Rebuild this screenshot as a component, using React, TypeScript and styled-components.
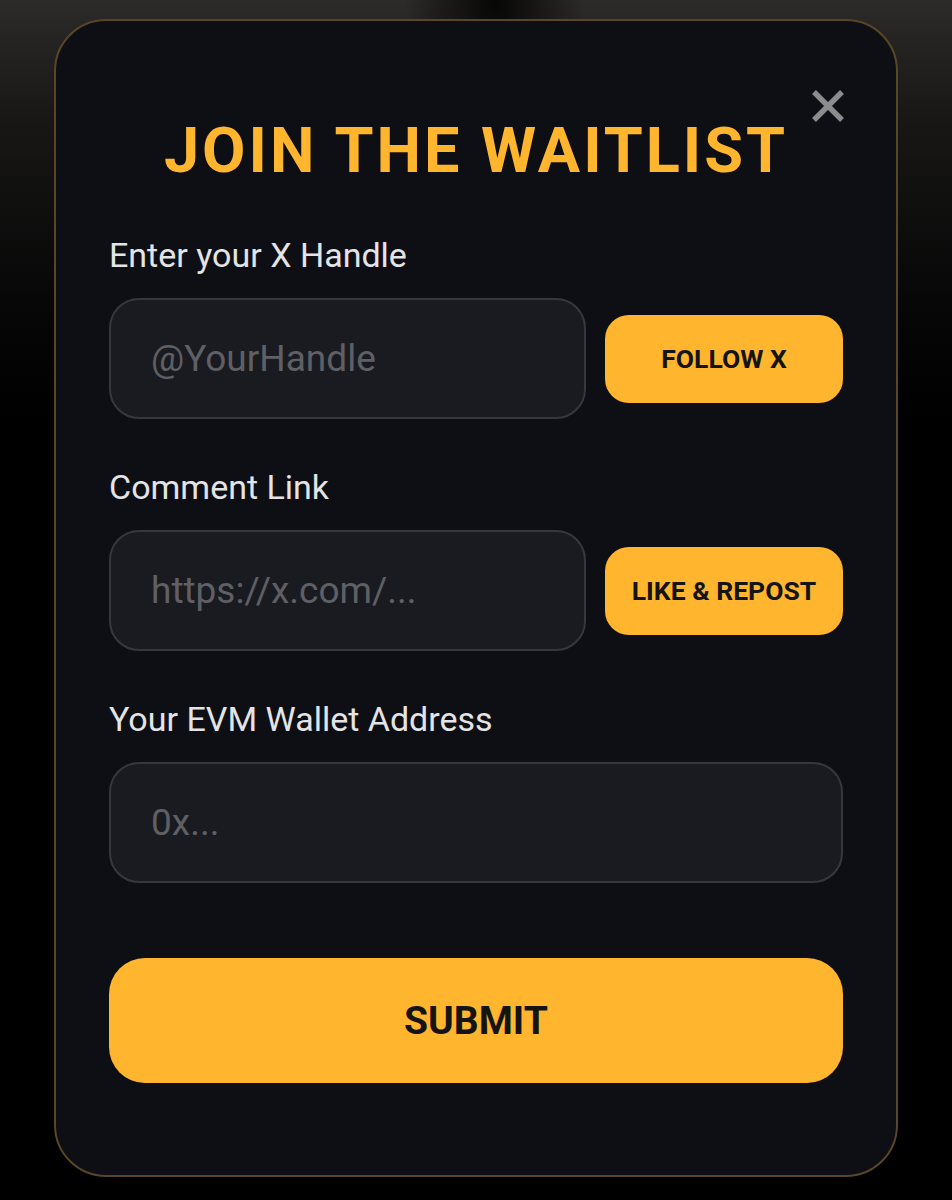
import * as React from "react";
import styled, { createGlobalStyle } from "styled-components";

const GlobalStyle = createGlobalStyle`
  * {
    box-sizing: border-box;
  }
  html, body {
    margin: 0;
    padding: 0;
    min-height: 100%;
  }
  body {
    font-family: Roboto, "Liberation Sans", Arial, sans-serif;
    background-color: #000;
    background-image:
      radial-gradient(ellipse 90px 160px at 52% 0, rgba(0, 0, 0, 0.85), rgba(0, 0, 0, 0) 100%),
      linear-gradient(to bottom, #2d2b29 0, #181716 120px, #070707 300px, #000 420px);
    background-repeat: no-repeat;
  }
`;

const Page = styled.div`
  min-height: 1200px;
  display: flex;
  justify-content: center;
  padding-top: 19px;
`;

const Modal = styled.div`
  position: relative;
  width: 844px;
  height: 1158px;
  background: #0e0f14;
  border: 2px solid #5a4626;
  border-radius: 52px;
  padding: 91px 53px 0 53px;
  display: flex;
  flex-direction: column;
`;

const CloseButton = styled.button`
  position: absolute;
  top: 68px;
  right: 51px;
  width: 34px;
  height: 34px;
  padding: 0;
  border: none;
  background: transparent;
  cursor: pointer;
  display: flex;
  align-items: center;
  justify-content: center;
`;

const Title = styled.h1`
  margin: 0 0 47px;
  text-align: center;
  font-size: 63px;
  line-height: 77px;
  font-weight: 700;
  letter-spacing: 3px;
  color: #ffb52e;
`;

const Field = styled.div`
  display: flex;
  flex-direction: column;
  & + & {
    margin-top: 49px;
  }
`;

const Label = styled.label`
  font-size: 34px;
  line-height: 38px;
  color: #e4e4e6;
  margin-bottom: 24px;
`;

const Row = styled.div`
  display: flex;
  align-items: center;
  gap: 19px;
`;

const Input = styled.input`
  flex: 1;
  min-width: 0;
  height: 121px;
  padding: 0 40px;
  background: #1a1b20;
  border: 2px solid #37383d;
  border-radius: 30px;
  font-family: inherit;
  font-size: 37px;
  color: #e4e4e6;
  outline: none;
  &::placeholder {
    color: #5f6065;
  }
`;

const TaskButton = styled.button`
  flex: 0 0 238px;
  height: 88px;
  border: none;
  border-radius: 24px;
  background: #ffb52e;
  color: #141414;
  font-family: inherit;
  font-weight: 700;
  font-size: 26.5px;
  cursor: pointer;
`;

const SubmitButton = styled.button`
  margin-top: 75px;
  height: 125px;
  border: none;
  border-radius: 36px;
  background: #ffb52e;
  color: #141414;
  font-family: inherit;
  font-weight: 700;
  font-size: 39px;
  cursor: pointer;
`;

const CloseIcon = () => (
  <svg width="34" height="34" viewBox="0 0 34 34" fill="none">
    <path d="M3 3 L31 31 M31 3 L3 31" stroke="#8c8c8e" strokeWidth="5.5" strokeLinecap="butt" />
  </svg>
);

export default function App() {
  return (
    <>
      <GlobalStyle />
      <Page>
        <Modal>
          <CloseButton aria-label="Close">
            <CloseIcon />
          </CloseButton>
          <Title>JOIN THE WAITLIST</Title>
          <Field>
            <Label htmlFor="handle">Enter your X Handle</Label>
            <Row>
              <Input id="handle" placeholder="@YourHandle" />
              <TaskButton>FOLLOW X</TaskButton>
            </Row>
          </Field>
          <Field>
            <Label htmlFor="comment">Comment Link</Label>
            <Row>
              <Input id="comment" placeholder="https://x.com/..." />
              <TaskButton>LIKE &amp; REPOST</TaskButton>
            </Row>
          </Field>
          <Field>
            <Label htmlFor="wallet">Your EVM Wallet Address</Label>
            <Row>
              <Input id="wallet" placeholder="0x..." />
            </Row>
          </Field>
          <SubmitButton>SUBMIT</SubmitButton>
        </Modal>
      </Page>
    </>
  );
}
